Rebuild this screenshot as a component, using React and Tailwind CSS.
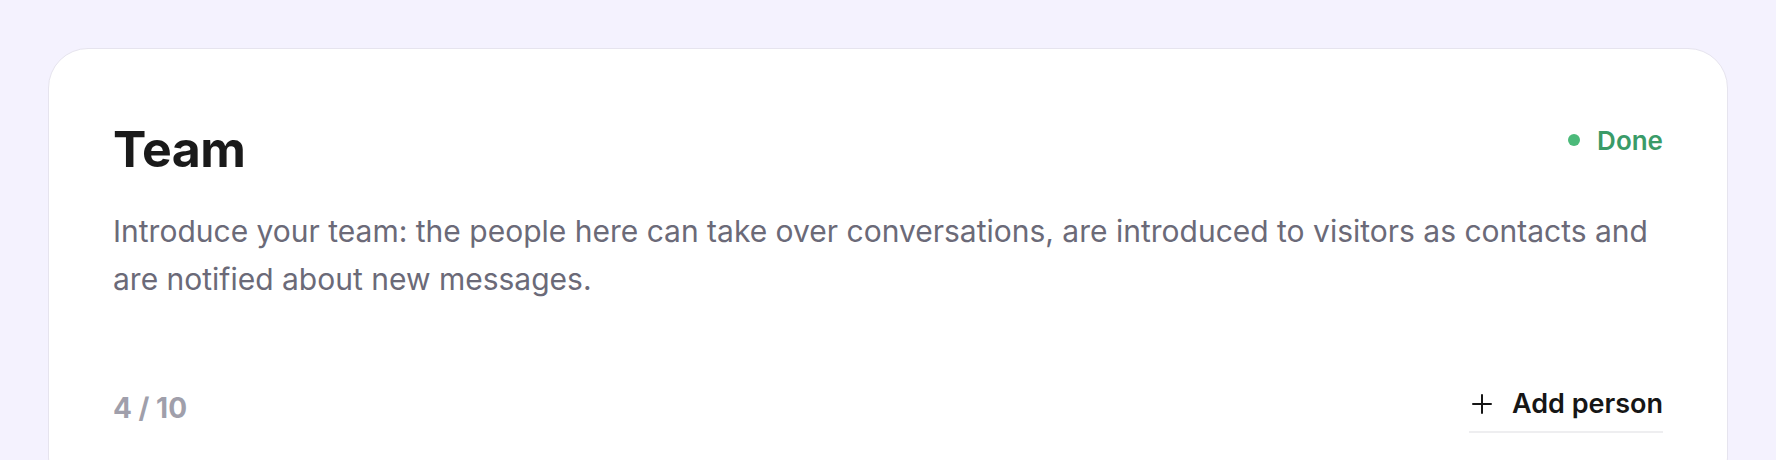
import React from "react";

export default function App() {
  return (
    <div className="min-h-screen bg-[#f4f2fe] px-12 pt-12" style={{ fontFamily: "Inter, 'Noto Sans', sans-serif" }}>
      <div className="rounded-[40px] border border-[#e6e4ee] bg-white px-16 pt-[62px] pb-16">
        <div className="flex items-start justify-between">
          <h1 className="mt-[8px] text-[50px] font-bold leading-[60px] tracking-[-0.5px] text-[#1a1a1a]">Team</h1>
          <div className="flex h-[58px] items-center gap-[17px]">
            <span className="h-[12px] w-[12px] rounded-full bg-[#4cba7a]"></span>
            <span className="text-[26px] font-semibold text-[#3a9b68]">Done</span>
          </div>
        </div>
        <p className="mt-[28px] text-[30px] leading-[48px] text-[#6b6a78]">
          Introduce your team: the people here can take over conversations, are introduced to visitors as contacts and are notified about new messages.
        </p>
        <div className="mt-[79px] flex items-center justify-between">
          <span className="text-[28px] font-bold text-[#a09fab]">4 / 10</span>
          <button className="flex items-center gap-5 border-b-2 border-[#eeeef0] pb-[7px] pt-[2px] pl-[3px] text-[27px] leading-[40px] font-semibold text-[#161616]">
            <svg width="20" height="20" viewBox="0 0 20 20" fill="none" stroke="currentColor" strokeWidth="2" strokeLinecap="round">
              <path d="M10 1v18M1 10h18" />
            </svg>
            Add person
          </button>
        </div>
      </div>
    </div>
  );
}
